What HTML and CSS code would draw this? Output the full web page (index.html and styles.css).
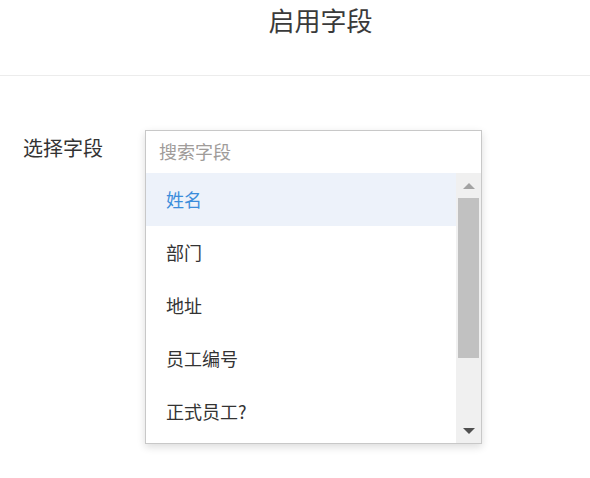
FILE: index.html
```html
<!DOCTYPE html>
<html lang="zh">
<head>
<meta charset="utf-8">
<link rel="stylesheet" href="styles.css">
</head>
<body>
<header class="header">
  <h1 class="title">启用字段</h1>
</header>
<main class="form-row">
  <label class="label">选择字段</label>
  <div class="dropdown">
    <input class="search" type="text" placeholder="搜索字段">
    <div class="body">
      <ul class="list">
        <li class="item selected">姓名</li>
        <li class="item">部门</li>
        <li class="item">地址</li>
        <li class="item">员工编号</li>
        <li class="item">正式员工?</li>
      </ul>
      <div class="scrollbar">
        <div class="sb-btn"><span class="arrow-up"></span></div>
        <div class="sb-track"><div class="sb-thumb"></div></div>
        <div class="sb-btn"><span class="arrow-down"></span></div>
      </div>
    </div>
  </div>
</main>
</body>
</html>
```
FILE: styles.css
```css
* { box-sizing: border-box; }
html, body { margin: 0; padding: 0; background: #fff; }
body {
  width: 590px;
  height: 478px;
  overflow: hidden;
  font-family: "Noto Sans CJK SC", "Noto Sans", sans-serif;
  color: #333;
}
.header {
  height: 76px;
  border-bottom: 1px solid #ececec;
  padding-left: 51px;
}
.title {
  margin: 0;
  text-align: center;
  font-size: 26px;
  font-weight: 400;
  line-height: 40px;
  color: #3a3a3a;
}
.form-row {
  display: flex;
  align-items: flex-start;
  margin-top: 54px;
}
.label {
  width: 145px;
  padding-left: 23px;
  font-size: 20px;
  line-height: 35px;
  color: #333;
}
.dropdown {
  width: 337px;
  height: 314px;
  border: 1px solid #c8c8c8;
  background: #fff;
  box-shadow: 0 3px 8px rgba(0, 0, 0, 0.14);
  display: flex;
  flex-direction: column;
}
.search {
  display: block;
  width: 100%;
  height: 42px;
  border: none;
  outline: none;
  padding: 0 0 3px 13px;
  font-family: inherit;
  font-size: 18px;
  color: #333;
  background: #fff;
}
.search::placeholder { color: #a09c9a; }
.body {
  display: flex;
  height: 270px;
  overflow: hidden;
}
.list {
  list-style: none;
  margin: 0;
  padding: 0;
  flex: 1;
}
.item {
  height: 53px;
  line-height: 53px;
  padding-left: 20px;
  font-size: 18px;
  color: #333;
}
.item.selected {
  background: #edf2fa;
  color: #3b8ddb;
}
.scrollbar {
  width: 25px;
  background: #f0f0f0;
  display: flex;
  flex-direction: column;
}
.sb-btn {
  height: 25px;
  display: flex;
  align-items: center;
  justify-content: center;
}
.sb-track {
  flex: 1;
  padding: 0 2px;
}
.sb-thumb {
  height: 160px;
  background: #c1c1c1;
}
.arrow-up {
  width: 0; height: 0;
  border-left: 6px solid transparent;
  border-right: 6px solid transparent;
  border-bottom: 6px solid #a3a3a3;
}
.arrow-down {
  width: 0; height: 0;
  border-left: 6px solid transparent;
  border-right: 6px solid transparent;
  border-top: 6px solid #505050;
}
```
